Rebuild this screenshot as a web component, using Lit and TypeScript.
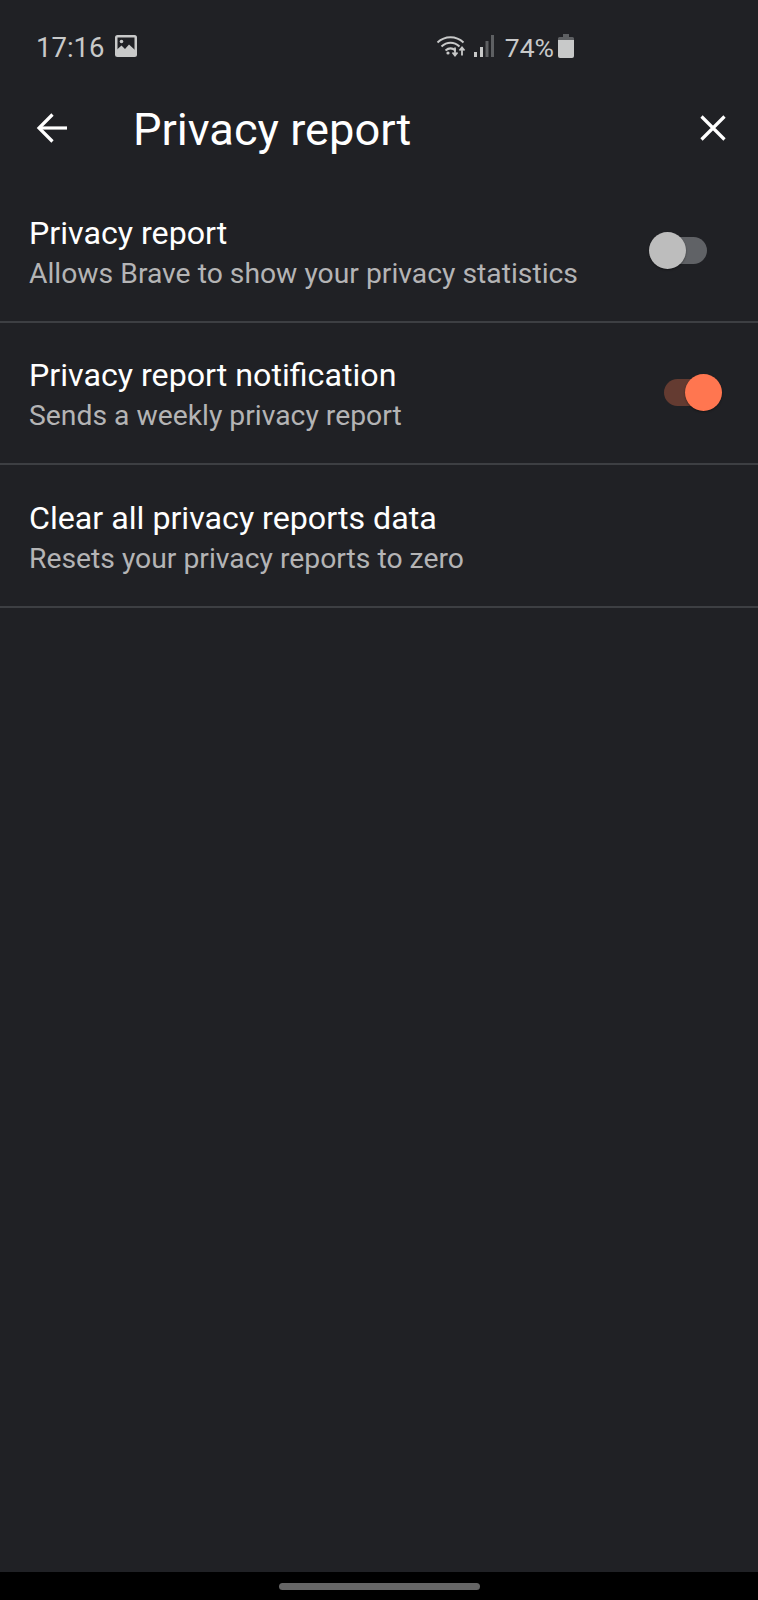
import { LitElement, css, html, svg } from 'lit'
import { customElement, property } from 'lit/decorators.js'

@customElement('app-toggle')
export class AppToggle extends LitElement {
  @property({ type: Boolean }) on = false;

  render() {
    return html`<div class="track ${this.on ? 'on' : ''}"><div class="thumb"></div></div>`
  }

  static styles = css`
    :host {
      display: block;
      width: 73px;
      height: 37px;
      position: relative;
    }
    .track {
      position: absolute;
      left: 15px;
      top: 5px;
      width: 43px;
      height: 27px;
      border-radius: 14px;
      background: #606266;
    }
    .thumb {
      position: absolute;
      left: -15px;
      top: -5px;
      width: 37px;
      height: 37px;
      border-radius: 50%;
      background: #bdbdbd;
      box-shadow: 0 1px 2px rgba(0, 0, 0, 0.4);
    }
    .track.on {
      background: #643b31;
    }
    .track.on .thumb {
      left: 21px;
      background: #ff7650;
    }
  `
}

const wifiIcon = svg`
  <path d="M1.5 8.5C9 1.5 20 1.5 27.5 8.5" />
  <path d="M5.5 12.5C11 7.5 18 7.5 23.5 12.5" />
  <path d="M9.5 16.5C13 13.5 16 13.5 19.5 16.5" />
`

@customElement('app-root')
export class AppRoot extends LitElement {
  rows = [
    { title: 'Privacy report', sub: 'Allows Brave to show your privacy statistics', toggle: 'off' },
    { title: 'Privacy report notification', sub: 'Sends a weekly privacy report', toggle: 'on' },
    { title: 'Clear all privacy reports data', sub: 'Resets your privacy reports to zero', toggle: '' },
  ];

  render() {
    return html`
      <div class="screen">
        <div class="status">
          <div class="status-left">
            <span class="time">17:16</span>
            <svg class="pic" width="22" height="22" viewBox="0 0 22 22">
              <rect width="22" height="22" rx="2.5" fill="#c8c9c9" />
              <rect x="2.5" y="2.5" width="17" height="17" fill="#202125" />
              <circle cx="6.5" cy="6.5" r="1.8" fill="#c8c9c9" />
              <path d="M2 19V14.5L6.5 10.5L10 14L14 9.5L20 15V20H2Z" fill="#c8c9c9" />
            </svg>
          </div>
          <div class="status-right">
            <svg class="wifi" width="30" height="24" viewBox="0 0 30 24" fill="none" stroke="#c8c9c9" stroke-width="2">
              ${wifiIcon}
              <circle cx="12" cy="19" r="1.6" fill="#c8c9c9" stroke="none" />
              <path d="M19 13.5V21M16.5 18.5L19 21.5L21.5 18.5" stroke-width="1.8" />
              <path d="M26 21.5V14M23.5 16.5L26 13.5L28.5 16.5" stroke-width="1.8" />
            </svg>
            <svg class="signal" width="20" height="24" viewBox="0 0 20 24" fill="#c8c9c9">
              <rect x="0" y="18" width="3" height="5" />
              <rect x="6" y="13" width="3" height="10" />
              <rect x="11.5" y="7" width="3" height="16" fill="#5e6063" />
              <rect x="17" y="1" width="3" height="22" fill="#5e6063" />
            </svg>
            <span class="pct">74%</span>
            <svg class="batt" width="16" height="24" viewBox="0 0 16 24">
              <path d="M5 0H11V3H14.5Q16 3 16 4.5V9H0V4.5Q0 3 1.5 3H5Z" fill="#5e6063" />
              <path d="M0 6H16V22Q16 24 14 24H2Q0 24 0 22Z" fill="#c8c9c9" />
            </svg>
          </div>
        </div>
        <div class="toolbar">
          <svg class="back" width="32" height="30" viewBox="0 0 32 30" fill="none" stroke="#fff" stroke-width="3.2">
            <path d="M31 15H4" />
            <path d="M16.5 1.5L3 15L16.5 28.5" />
          </svg>
          <span class="heading">Privacy report</span>
          <svg class="close" width="26" height="26" viewBox="0 0 26 26" fill="none" stroke="#fff" stroke-width="3.2">
            <path d="M1.5 1.5L24.5 24.5M24.5 1.5L1.5 24.5" />
          </svg>
        </div>
        <div class="list">
          ${this.rows.map(
            (r) => html`
              <div class="row">
                <div class="text">
                  <div class="title">${r.title}</div>
                  <div class="sub">${r.sub}</div>
                </div>
                ${r.toggle
                  ? html`<app-toggle class="sw ${r.toggle}" ?on=${r.toggle === 'on'}></app-toggle>`
                  : ''}
              </div>
            `
          )}
        </div>
        <div class="spacer"></div>
        <div class="nav"><div class="pill"></div></div>
      </div>
    `
  }

  static styles = css`
    :host {
      display: block;
      font-family: Roboto, 'Noto Sans', sans-serif;
    }
    .screen {
      width: 758px;
      height: 1600px;
      background: #202125;
      display: flex;
      flex-direction: column;
      overflow: hidden;
    }
    .status {
      height: 70px;
      flex: none;
      display: flex;
      align-items: center;
      padding: 22px 184px 0 36px;
      box-sizing: border-box;
      justify-content: space-between;
      color: #c8c9c9;
    }
    .status-left,
    .status-right {
      display: flex;
      align-items: center;
    }
    .time {
      font-size: 27.5px;
      line-height: 32px;
      padding-top: 4px;
    }
    .pic {
      margin-left: 11px;
    }
    .wifi {
      margin-right: 8px;
    }
    .pct {
      font-size: 26.5px;
      line-height: 32px;
      padding-top: 4px;
      margin-left: 11px;
      margin-right: 4px;
    }
    .toolbar {
      height: 110px;
      flex: none;
      display: flex;
      align-items: center;
      padding: 6px 32px 0 36px;
      box-sizing: border-box;
    }
    .heading {
      font-size: 45.2px;
      line-height: 52px;
      color: #fff;
      margin-left: 65px;
      padding-top: 4px;
      flex: 1;
    }
    .list {
      flex: none;
    }
    .row {
      height: 142.5px;
      box-sizing: border-box;
      border-bottom: 2px solid #3d3f43;
      display: flex;
      align-items: center;
      justify-content: space-between;
      padding: 0 36px 0 29px;
    }
    .text {
      padding-top: 6px;
    }
    .title {
      font-size: 32.2px;
      line-height: 40px;
      color: #fff;
    }
    .sub {
      font-size: 28.3px;
      line-height: 41px;
      color: #b4b4b5;
    }
    .spacer {
      flex: 1;
    }
    .nav {
      height: 28px;
      flex: none;
      background: #000;
      display: flex;
      justify-content: center;
      padding-top: 11px;
      box-sizing: border-box;
    }
    .pill {
      width: 201px;
      height: 7px;
      border-radius: 4px;
      background: #666;
    }
  `
}

declare global {
  interface HTMLElementTagNameMap {
    'app-root': AppRoot
    'app-toggle': AppToggle
  }
}
